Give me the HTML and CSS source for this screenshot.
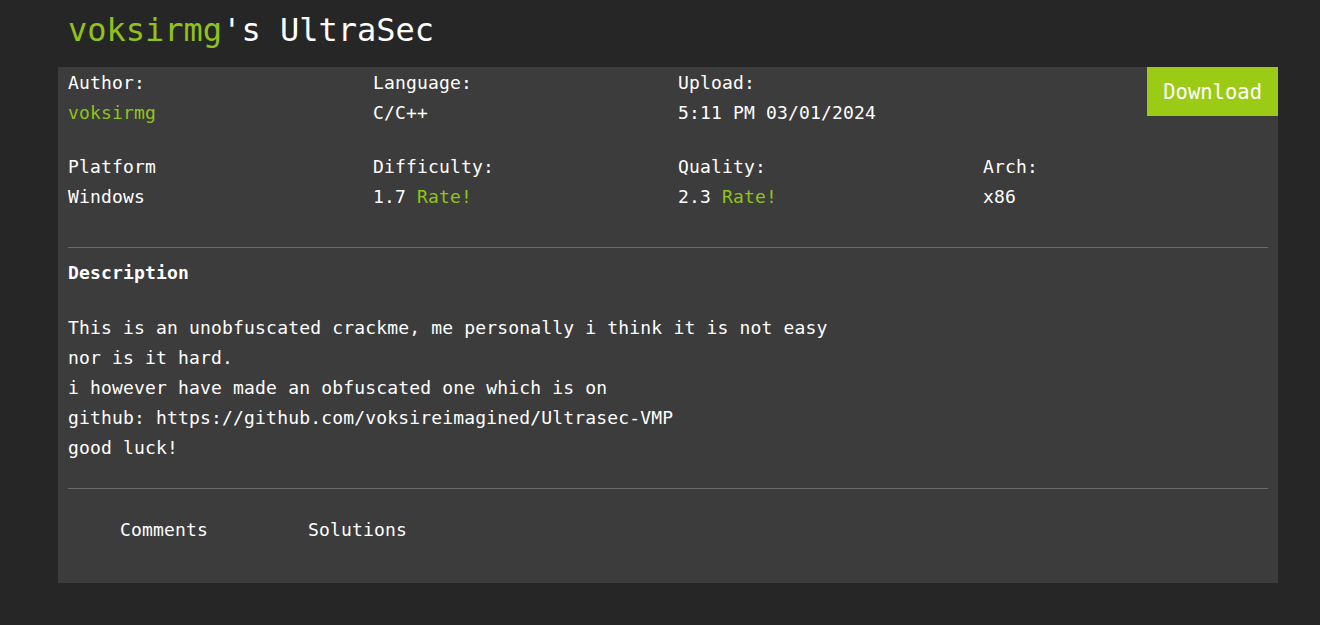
FILE: index.html
```html
<!DOCTYPE html>
<html>
<head>
<meta charset="utf-8">
<link rel="stylesheet" href="styles.css">
</head>
<body>
<div class="page">
  <h1 class="title"><span class="green">voksirmg</span>'s UltraSec</h1>
  <div class="card">
    <div class="meta">
      <div class="cell"><div class="label">Author:</div><div class="value green">voksirmg</div></div>
      <div class="cell"><div class="label">Language:</div><div class="value">C/C++</div></div>
      <div class="cell"><div class="label">Upload:</div><div class="value">5:11 PM 03/01/2024</div></div>
      <div class="cell cell-btn"><a class="download">Download</a></div>
    </div>
    <div class="meta meta2">
      <div class="cell"><div class="label">Platform</div><div class="value">Windows</div></div>
      <div class="cell"><div class="label">Difficulty:</div><div class="value">1.7 <span class="green">Rate!</span></div></div>
      <div class="cell"><div class="label">Quality:</div><div class="value">2.3 <span class="green">Rate!</span></div></div>
      <div class="cell"><div class="label">Arch:</div><div class="value">x86</div></div>
    </div>
    <div class="inner">
      <hr class="rule rule1">
      <div class="desc-title">Description</div>
      <p class="desc">This is an unobfuscated crackme, me personally i think it is not easy<br>nor is it hard.<br>i however have made an obfuscated one which is on<br>github: https://github.com/voksireimagined/Ultrasec-VMP<br>good luck!</p>
      <hr class="rule rule2">
      <div class="tabs">
        <span class="tab">Comments</span>
        <span class="tab">Solutions</span>
      </div>
    </div>
  </div>
</div>
</body>
</html>
```

FILE: styles.css
```css
html, body {
  margin: 0;
  padding: 0;
  background: #262626;
  color: #ffffff;
  font-family: "DejaVu Sans Mono", "Liberation Mono", monospace;
  font-size: 18px;
  letter-spacing: 0.17px;
}
.page {
  padding-left: 58px;
  width: 1220px;
}
.title {
  margin: 0;
  height: 67px;
  line-height: 60px;
  font-size: 32px;
  font-weight: normal;
  letter-spacing: 0;
  padding-left: 10px;
}
.green { color: #8fc31a; }
.card {
  background: #3c3c3c;
  padding-top: 1px;
  padding-bottom: 38px;
}
.meta {
  display: grid;
  grid-template-columns: repeat(4, 305px);
}
.meta2 { margin-top: 24px; }
.cell {
  padding-left: 10px;
  line-height: 30px;
}
.cell-btn {
  display: flex;
  justify-content: flex-end;
  align-items: flex-start;
  margin-top: -1px;
}
.download {
  display: block;
  background: #9bcb15;
  color: #ffffff;
  font-size: 20.5px;
  letter-spacing: 0;
  height: 49px;
  line-height: 51px;
  padding: 0 16px;
}
.inner {
  padding: 0 10px;
}
.rule {
  border: 0;
  height: 1px;
  background: #6a6a6a;
  margin: 0;
}
.rule1 { margin-top: 35px; }
.desc-title {
  font-weight: bold;
  line-height: 30px;
  margin-top: 10px;
}
.desc {
  margin: 25px 0 0;
  line-height: 30px;
}
.rule2 { margin-top: 25px; }
.tabs {
  display: flex;
  padding-left: 2px;
  margin-top: 26px;
  line-height: 30px;
}
.tab {
  padding: 0 50px;
}
```
